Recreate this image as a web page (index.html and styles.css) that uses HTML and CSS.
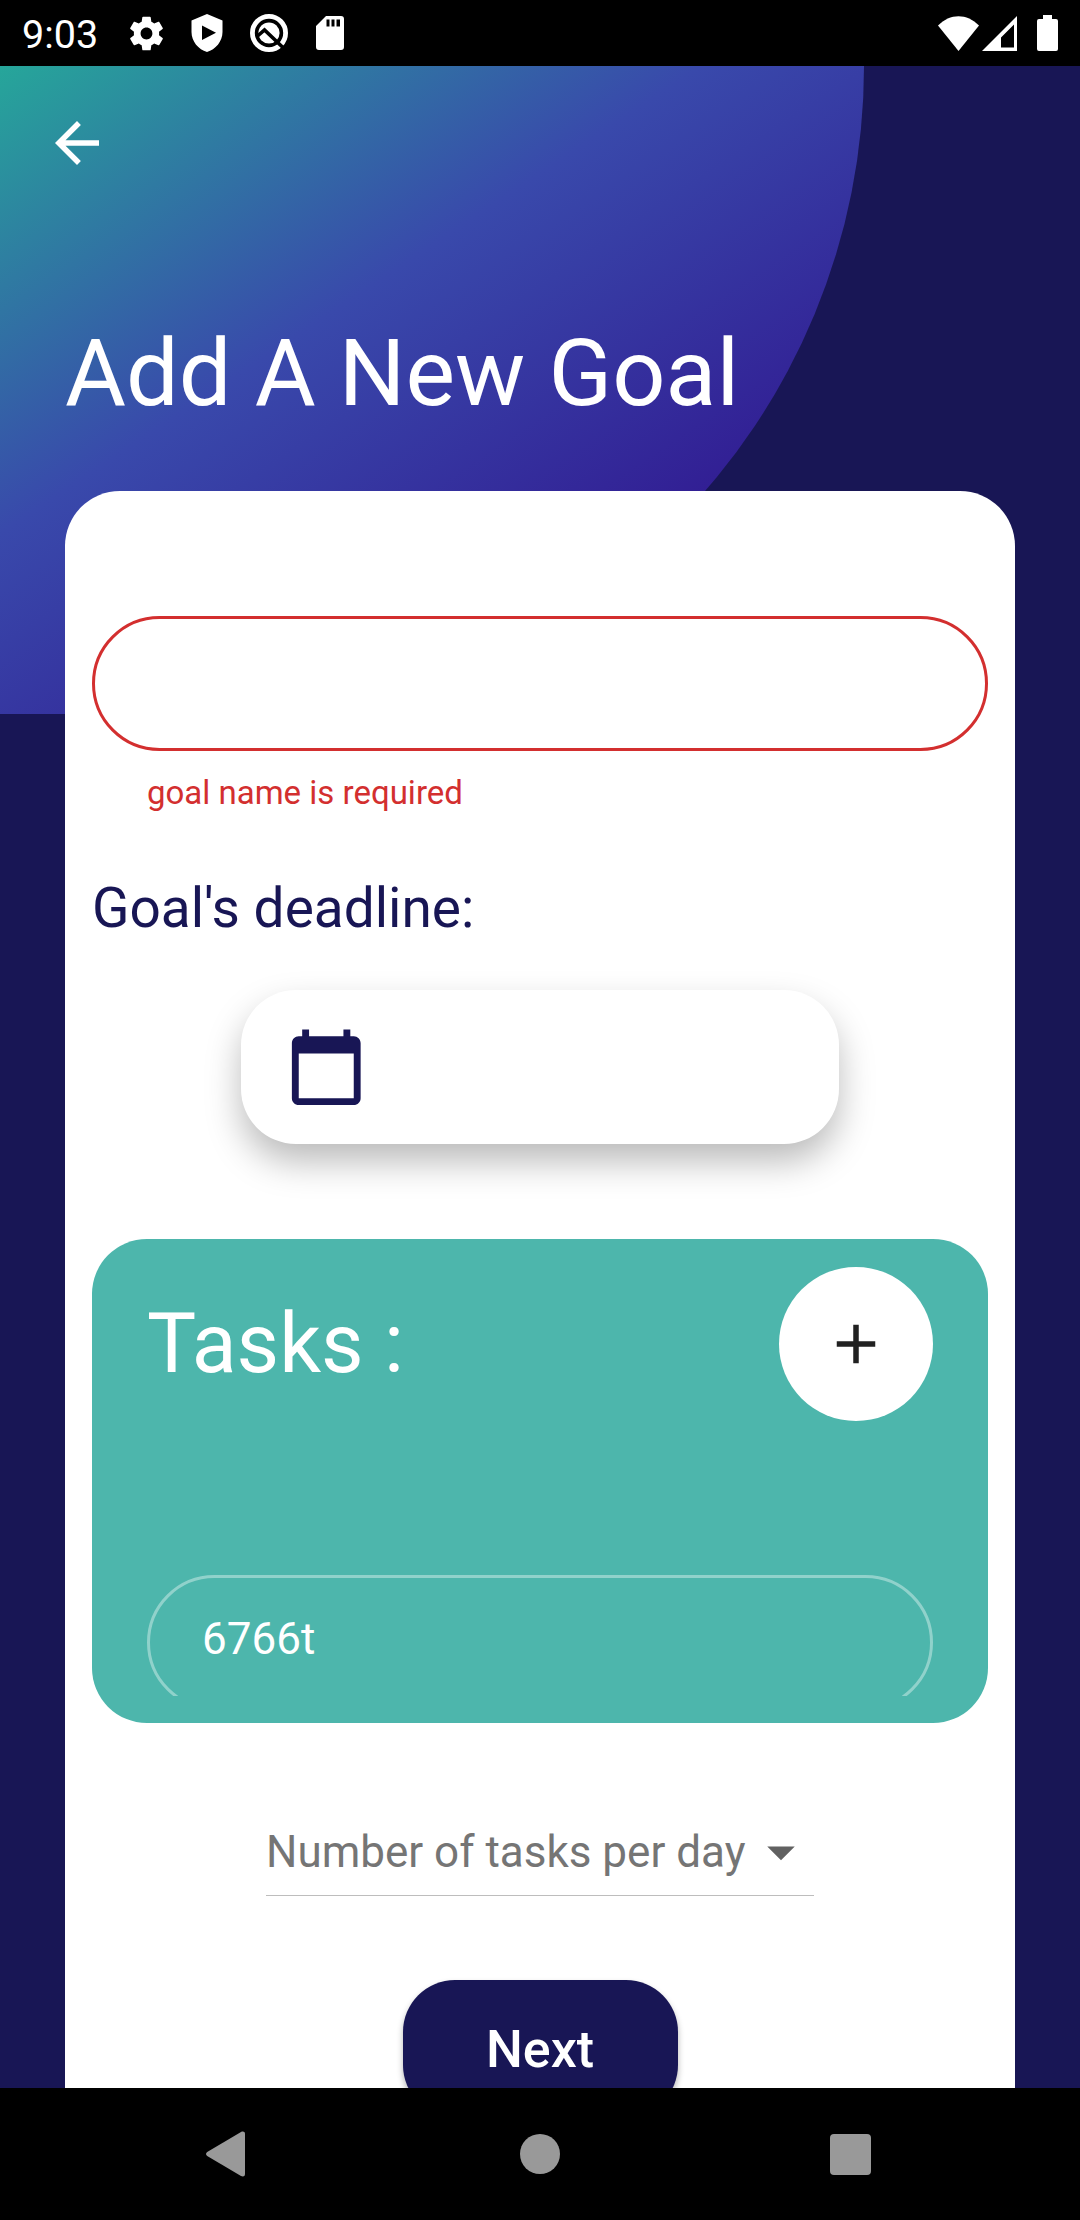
FILE: index.html
```html
<!DOCTYPE html>
<html lang="en">
<head>
<meta charset="utf-8">
<title>Add A New Goal</title>
<link rel="stylesheet" href="styles.css">
</head>
<body>
<div class="screen">
  <div class="status-bar">
    <span class="clock">9:03</span>
    <div class="notifications">
      <svg class="gear" viewBox="2.2 2 19.6 20"><path d="M19.43 12.98c.04-.32.07-.64.07-.98s-.03-.66-.07-.98l2.11-1.65c.19-.15.24-.42.12-.64l-2-3.46c-.12-.22-.39-.3-.61-.22l-2.49 1c-.52-.4-1.08-.73-1.69-.98l-.38-2.65C14.46 2.18 14.25 2 14 2h-4c-.25 0-.46.18-.49.42l-.38 2.65c-.61.25-1.17.59-1.69.98l-2.49-1c-.23-.09-.49 0-.61.22l-2 3.46c-.13.22-.07.49.12.64l2.11 1.65c-.04.32-.07.65-.07.98s.03.66.07.98l-2.11 1.65c-.19.15-.24.42-.12.64l2 3.46c.12.22.39.3.61.22l2.49-1c.52.4 1.08.73 1.69.98l.38 2.65c.03.24.24.42.49.42h4c.25 0 .46-.18.49-.42l.38-2.65c.61-.25 1.17-.59 1.69-.98l2.49 1c.23.09.49 0 .61-.22l2-3.46c.12-.22.07-.49-.12-.64l-2.11-1.65zM12 15.5c-1.93 0-3.5-1.57-3.5-3.5s1.57-3.5 3.5-3.5 3.5 1.57 3.5 3.5-1.57 3.5-3.5 3.5z"/></svg>
      <svg class="shield" viewBox="0 0 32 38"><path fill-rule="evenodd" d="M16 0 31.500 6.500V18C31.500 27.500 24.500 35.500 16 38 7.500 35.500 .5 27.500 .5 18V6.500zM11 11.500V26L25 18.800z"/></svg>
      <svg class="scan" viewBox="0 0 38 38"><circle cx="19" cy="19" r="16.600" class="ring"/><circle cx="19" cy="19" r="10.600"/><path class="cut" d="M7 22.500 14.500 16 34 34.500"/></svg>
      <svg class="sd" viewBox="0 0 28 34"><path fill-rule="evenodd" d="M10 0H25a3 3 0 0 1 3 3V31a3 3 0 0 1-3 3H3a3 3 0 0 1-3-3V10zM10.500 3.500v7h3v-7zM15.500 3.500v7h3v-7zM20.500 3.500v7h3.500v-7z"/></svg>
    </div>
    <div class="indicators">
      <svg class="wifi" viewBox="0 0 41 35"><path d="M0 9.500C12-3 29-3 41 9.500L20.500 35z"/></svg>
      <svg class="signal" viewBox="0 0 35 35"><path fill-rule="evenodd" d="M35 0V35H0zM32 8.500 19 21.500V31.500H32z"/></svg>
      <svg class="battery" viewBox="0 0 21 36"><path d="M6 0h9v4h4a2 2 0 0 1 2 2v28a2 2 0 0 1-2 2H2a2 2 0 0 1-2-2V6a2 2 0 0 1 2-2h4z"/></svg>
    </div>
  </div>

  <main class="page">
    <svg class="back" viewBox="0 0 24 24"><path d="M20 11H7.830l5.590-5.590L12 4l-8 8 8 8 1.410-1.410L7.830 13H20v-2z"/></svg>
    <h1 class="title">Add A New Goal</h1>

    <section class="card">
      <div class="name-field"></div>
      <p class="error">goal name is required</p>
      <h2 class="deadline">Goal's deadline:</h2>
      <div class="date-button">
        <svg class="calendar" viewBox="0 0 24 24"><path d="M20 3h-1V1h-2v2H7V1H5v2H4c-1.100 0-2 .9-2 2v16c0 1.100.9 2 2 2h16c1.100 0 2-.9 2-2V5c0-1.100-.9-2-2-2zm0 18H4V8h16v13z"/></svg>
      </div>

      <div class="tasks">
        <div class="tasks-header">
          <span class="tasks-title">Tasks :</span>
          <div class="add"><svg viewBox="0 0 24 24"><path d="M19 13h-6v6h-2v-6H5v-2h6V5h2v6h6v2z"/></svg></div>
        </div>
        <div class="task-list">
          <div class="task-field">6766t</div>
        </div>
      </div>

      <div class="select">
        <span>Number of tasks per day</span>
        <svg viewBox="0 0 24 24"><path d="M7 10l5 5 5-5z"/></svg>
      </div>
      <div class="next">Next</div>
    </section>
  </main>

  <nav class="nav-bar">
    <svg class="nav-back" viewBox="0 0 39 46"><path d="M1.200 21 35 1C37 0 39 .5 39 3V43C39 45.500 37 46 35 45L1.200 25C-.4 24-.4 22 1.200 21z"/></svg>
    <div class="nav-home"></div>
    <div class="nav-recent"></div>
  </nav>
</div>
</body>
</html>
```
FILE: styles.css
```css
* { box-sizing: border-box; }

body {
  margin: 0;
  font-family: Roboto, "Liberation Sans", sans-serif;
}

h1, h2, p { margin: 0; font-weight: 400; }
svg { display: block; flex: none; }

.screen {
  display: flex;
  flex-direction: column;
  width: 1080px;
  height: 2220px;
  overflow: hidden;
  background: #181655;
}

/* Status bar */
.status-bar {
  display: flex;
  align-items: center;
  flex: none;
  height: 66px;
  padding: 0 22px 0 22px;
  background: #000;
  color: #fff;
  fill: #fff;
}
.clock { width: 108px; font-size: 39.500px; line-height: 46px; padding-top: 3px; }
.notifications { display: flex; align-items: center; }
.gear { width: 33px; height: 35px; }
.shield { width: 32px; height: 38px; margin-left: 28px; }
.scan { width: 38px; height: 38px; margin-left: 26.500px; }
.scan .ring { fill: none; stroke: #fff; stroke-width: 4.800; }
.scan .cut { fill: none; stroke: #000; stroke-width: 3.600; }
.sd { width: 28px; height: 34px; margin-left: 28px; }
.indicators { display: flex; align-items: center; margin-left: auto; }
.wifi { width: 41px; height: 35px; }
.signal { width: 35px; height: 35px; margin-left: 3px; }
.battery { width: 21px; height: 36px; margin-left: 20px; }

/* Page */
.page {
  flex: none;
  height: 2022px;
  overflow: hidden;
  position: relative;
  isolation: isolate;
}
.page::before {
  content: "";
  position: absolute;
  z-index: -1;
  top: 0;
  left: 0;
  width: 864px;
  height: 648px;
  border-bottom-right-radius: 648px;
  background: linear-gradient(146.310deg, #26a69a 0%, #3949ab 38.240%, #311b92 76.470%);
}
.back { width: 66px; height: 66px; margin: 44px 0 0 44px; fill: #fff; }
.title {
  margin: 142px 0 0 65px;
  font-size: 93.500px;
  line-height: 110px;
  color: #fff;
  white-space: nowrap;
}

.card {
  display: flex;
  flex-direction: column;
  height: 1800px;
  margin: 63px 65px 0;
  padding: 125px 27px 0;
  border-radius: 55px 55px 0 0;
  background: #fff;
}
.name-field {
  flex: none;
  height: 135px;
  border: 3px solid #d32f2f;
  border-radius: 68px;
}
.error {
  margin: 22px 0 0 55px;
  font-size: 33px;
  line-height: 40px;
  color: #d32f2f;
}
.deadline {
  margin-top: 63px;
  font-size: 55px;
  line-height: 64px;
  color: #181655;
}
.date-button {
  display: flex;
  flex: none;
  align-items: center;
  align-self: center;
  width: 598px;
  height: 154px;
  margin-top: 50px;
  padding: 1px 0 0 44px;
  border-radius: 55px;
  background: #fff;
  box-shadow: 0 18px 36px -1px rgba(0,0,0,.28);
}
.calendar { width: 82.500px; height: 82.500px; fill: #181655; }

.tasks {
  display: flex;
  flex: none;
  flex-direction: column;
  height: 484px;
  margin-top: 95px;
  padding: 27px 55px;
  border-radius: 55px;
  background: #4db6ac;
  color: #fff;
}
.tasks-header { display: flex; flex: none; align-items: center; justify-content: space-between; height: 155px; }
.tasks-title { padding-top: 1px; font-size: 82.500px; line-height: 96px; }
.add {
  display: flex;
  align-items: center;
  justify-content: center;
  width: 154px;
  height: 154px;
  border-radius: 50%;
  background: #fff;
}
.add svg { width: 66px; height: 66px; fill: #212121; }
.task-list { flex: 1; min-height: 0; padding-top: 154px; overflow: hidden; }
.task-field {
  height: 135px;
  padding: 35px 52px;
  border: 3px solid rgba(255,255,255,.38);
  border-radius: 68px;
  font-size: 44px;
  line-height: 52px;
}

.select {
  display: flex;
  flex: none;
  align-items: center;
  align-self: center;
  justify-content: space-between;
  width: 548px;
  height: 77px;
  margin-top: 96px;
  padding-bottom: 10px;
  border-bottom: 1px solid #bdbdbd;
  font-size: 44px;
  line-height: 52px;
  color: #757575;
  white-space: nowrap;
}
.select svg { width: 66px; height: 66px; fill: #616161; }

.next {
  flex: none;
  align-self: center;
  width: 275px;
  height: 137px;
  margin-top: 84px;
  border-radius: 52px;
  background: #181655;
  box-shadow: 0 4px 6px rgba(0,0,0,.3);
  font-size: 52px;
  font-weight: 500;
  line-height: 139px;
  text-align: center;
  color: #fff;
}

/* System navigation */
.nav-bar {
  display: flex;
  flex: none;
  align-items: center;
  justify-content: space-between;
  height: 132px;
  padding: 0 209px 0 206px;
  background: #000;
  fill: #999;
}
.nav-back { width: 39px; height: 46px; margin-right: 2px; }
.nav-home { width: 40px; height: 40px; margin-left: 2px; border-radius: 50%; background: #999; }
.nav-recent { width: 41px; height: 41px; border-radius: 4px; background: #999; }
```
